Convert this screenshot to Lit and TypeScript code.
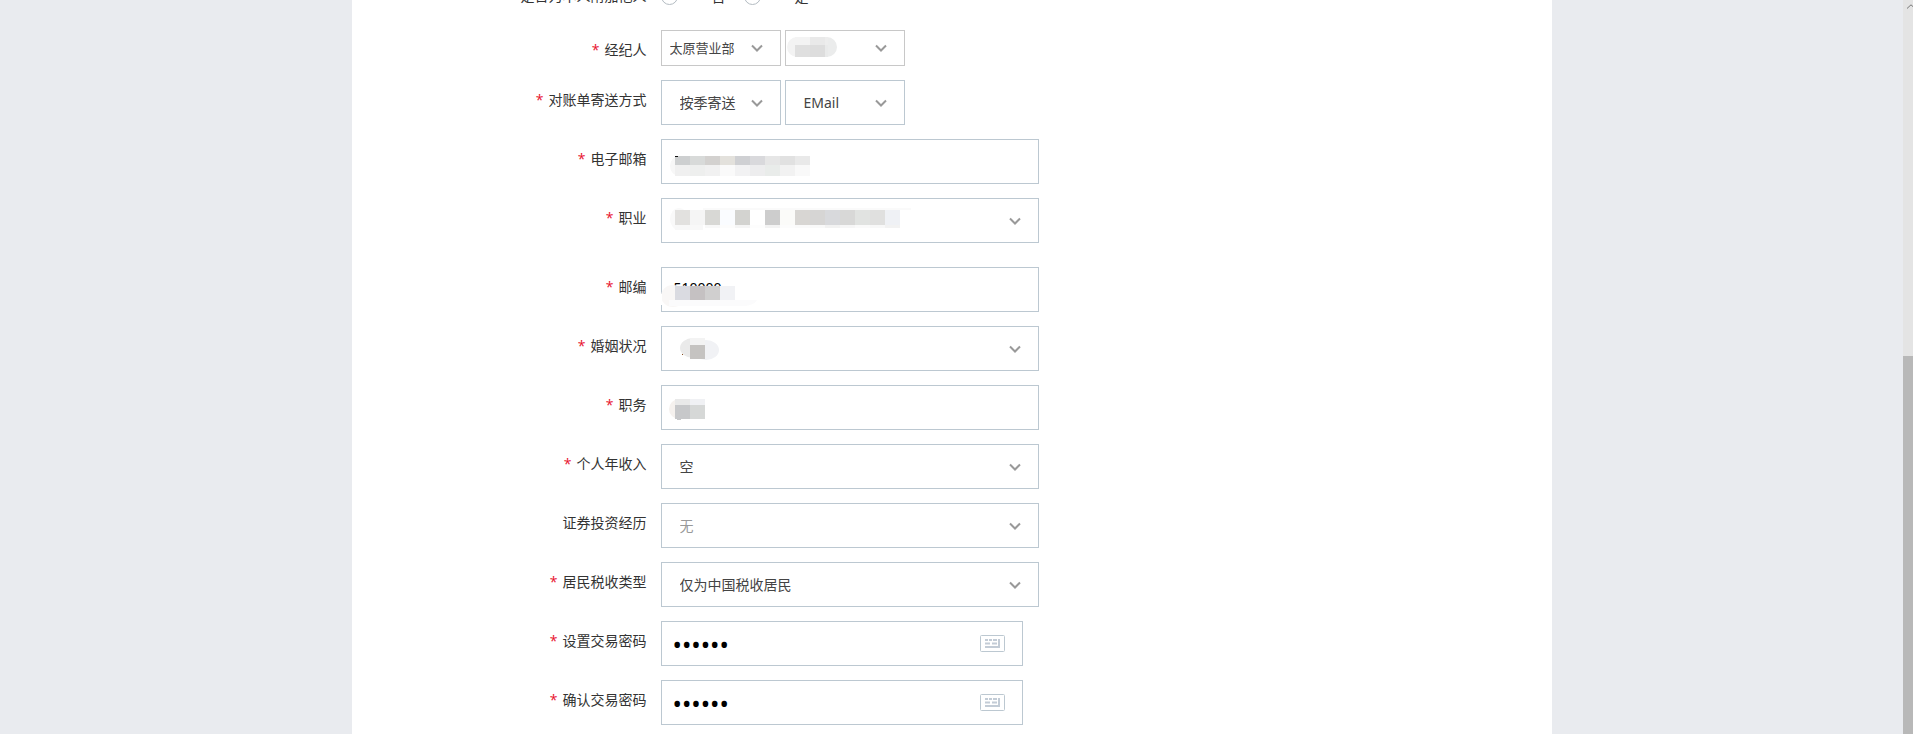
import { LitElement, html, svg, css, nothing } from "lit";
import { customElement, property } from "lit/decorators.js";
import { classMap } from "lit/directives/class-map.js";

type Block = [x: number, y: number, w: number, h: number, fill: string];
type Mask = { blobs: [cx: number, cy: number, rx: number, ry: number, fill: string][]; blocks: Block[] };

const strip = (x: number, y: number, h: number, fills: string[]): Block[] =>
  fills.map((fill, i) => [x + i * 15, y, 15, h, fill] as Block);

const masks: Record<string, Mask> = {
  broker: {
    blobs: [[12, 17, 10, 10, "#f3f3f3"], [42, 17, 10, 10, "#ebecec"]],
    blocks: [
      [10, 7, 15, 8, "#f3f3f3"], [25, 7, 15, 8, "#e9e9e9"], [40, 7, 3, 8, "#ededed"],
      [10, 15, 15, 12, "#dfdfdf"], [25, 15, 15, 12, "#dddddd"], [40, 15, 3, 12, "#e9eaea"],
    ],
  },
  email: {
    blobs: [[18, 27, 9, 10, "#f7f7f7"]],
    blocks: [
      ...strip(14, 17, 9, ["#cdcfd0", "#d8dad9", "#d3d1cf", "#e3e1dc", "#cfd0d3", "#d9d9dc", "#e6e6e6", "#e1e1e1", "#e9e9e9"]),
      ...strip(14, 26, 11, ["#f0f0f0", "#eeefee", "#f1f1f1", "#fafafa", "#f2f2f3", "#ededee", "#e9ecea", "#f2f2f2", "#f9f9f9"]),
      [14, 17, 3, 1, "#111111"],
    ],
  },
  job: {
    blobs: [[18, 21, 9, 11, "#f9f9f9"]],
    blocks: [
      [42, 10, 208, 2, "#fafafa"],
      [14, 27, 28, 5, "#f8f8f8"],
      ...strip(14, 12, 15, ["#e2e1df", "#f5f5f5", "#d8d8d5", "#fafcff", "#d3d3d0", "#ffffff", "#cdcdcd", "#fbfbf9", "#d8d6d3", "#d6d5d4", "#d8d9dc", "#d8d8d7", "#e1e3e1", "#e0e0df", "#eff1f5"]),
      ...strip(44, 27, 3, ["#f8f8f8", "#fcfcfc", "#f5f5f5", "#fdfdfd", "#f3f3f3", "#fcfcfc", "#fafafa", "#f9f9f9", "#f2f2f2", "#f6f6f6", "#fafafa", "#f8f8f8", "#f2f2f2"]),
    ],
  },
  zip: {
    blobs: [[12, 29, 12, 11, "#f9f7f6"], [82, 32, 14, 7, "#fbfbfc"]],
    blocks: [
      [0, 27, 1, 11, "#ffffff"],
      [8, 33, 78, 6, "#fbfbfc"],
      ...strip(14, 19, 14, ["#dadbe1", "#c5c1c2", "#d0cfcf", "#f1f2f5"]),
      [74, 19, 24, 14, "#ffffff"],
    ],
  },
  marriage: {
    blobs: [[32, 22, 13, 10, "#eaeaea"], [45, 24, 13, 10, "#f1f2f5"]],
    blocks: [[29, 12, 15, 7, "#f3f3f3"], [29, 19, 15, 14, "#c5c3c1"], [21, 28, 1, 1, "#8a5020"]],
  },
  post: {
    blobs: [[18, 24, 10, 10, "#f5f1ee"]],
    blocks: [
      [14, 14, 15, 6, "#e9e9e9"], [29, 14, 15, 6, "#f0f1f4"],
      [14, 20, 15, 14, "#c7c8ca"], [29, 20, 15, 14, "#d6d8d7"], [16, 34, 4, 1, "#c7c8ca"],
    ],
  },
};

const drawMask = (name: string) => {
  const mask = masks[name];
  if (!mask) return nothing;
  return html`<svg class="mask" aria-hidden="true">
    ${mask.blobs.map(([cx, cy, rx, ry, f]) => svg`<ellipse cx=${cx} cy=${cy} rx=${rx} ry=${ry} fill=${f}></ellipse>`)}
    ${mask.blocks.map(([x, y, w, h, f]) => svg`<rect x=${x} y=${y} width=${w} height=${h} fill=${f}></rect>`)}
  </svg>`;
};

const fieldStyles = css`
  :host { display: grid; grid-template-columns: minmax(0, 1fr); }
  .box {
    grid-area: 1 / 1;
    box-sizing: border-box;
    width: 100%;
    height: 45px;
    margin: 0;
    border: 1px solid #bcc8d1;
    border-radius: 0;
    background: #fff;
    font: 14px/20px "Noto Sans", "Noto Sans CJK SC", sans-serif;
    outline-offset: -1px;
  }
  .mask { grid-area: 1 / 1; width: 100%; height: 36px; pointer-events: none; z-index: 1; overflow: visible; }
`;

@customElement("select-field")
class SelectField extends LitElement {
  @property() value = "";
  @property() name = "";
  @property() mask = "";
  @property({ type: Boolean }) compact = false;
  @property({ type: Boolean }) muted = false;

  static styles = [fieldStyles, css`
    .box { appearance: none; padding: 0 40px 0 18px; color: #444; }
    .compact { height: 36px; padding: 0 24px 0 8px; border-color: #c8c8c8; font-size: 13px; }
    .muted { color: #999; }
    .arrow { grid-area: 1 / 1; place-self: center end; margin-right: 18px; pointer-events: none; }
  `];

  render() {
    return html`
      <select class=${classMap({ box: true, compact: this.compact, muted: this.muted })} aria-label=${this.name}>
        <option>${this.value}</option>
      </select>
      <svg class="arrow" width="12" height="8" viewBox="0 0 12 8" fill="none" stroke="#999" stroke-width="2" aria-hidden="true">
        <path d="M1 1.5 6 6.5 11 1.5"></path>
      </svg>
      ${drawMask(this.mask)}
    `;
  }
}

@customElement("text-field")
class TextField extends LitElement {
  @property() value = "";
  @property() name = "";
  @property() mask = "";

  static styles = [fieldStyles, css`
    .box { padding: 0 12px 4px; color: #000; }
  `];

  render() {
    return html`<input class="box" type="text" aria-label=${this.name} .value=${this.value}>${drawMask(this.mask)}`;
  }
}

@customElement("password-field")
class PasswordField extends LitElement {
  @property() name = "";

  static styles = [fieldStyles, css`
    .box { padding: 0 60px 0 11px; color: #000; font-size: 25px; }
    .keyboard {
      grid-area: 1 / 1;
      place-self: center end;
      display: flex;
      margin-right: 18px;
      padding: 0;
      border: 0;
      background: none;
      cursor: pointer;
    }
  `];

  render() {
    return html`
      <input class="box" type="password" aria-label=${this.name} .value=${"123456"}>
      <button class="keyboard" type="button" aria-label="软键盘">
        <svg width="25" height="17" viewBox="0 0 25 17" fill="none" aria-hidden="true">
          <rect x=".5" y=".5" width="24" height="16" rx="1" stroke="#bcc8d1"></rect>
          <path d="M5 5h3M9 5h3M13 5h4M5 8.500h5M12 8.500h5" stroke="#c3ccd6" stroke-width="2"></path>
          <path d="M5 12h15M19 4v9" stroke="#c3ccd6" stroke-width="2"></path>
        </svg>
      </button>
    `;
  }
}

@customElement("form-row")
class FormRow extends LitElement {
  @property() label = "";
  @property({ type: Boolean }) required = false;

  static styles = css`
    :host { display: grid; grid-template-columns: 295px minmax(0, 1fr); column-gap: 14px; }
    .label { height: 36px; text-align: right; font-size: 14px; line-height: 40px; color: #333; }
    .star { margin-right: 5px; color: #e8112d; font-family: "Open Sans", sans-serif; }
    .controls { display: flex; gap: 4px; align-items: start; }
  `;

  render() {
    return html`
      <div class="label">${this.required ? html`<span class="star">*</span>` : nothing}${this.label}</div>
      <div class="controls"><slot></slot></div>
    `;
  }
}

@customElement("app-root")
class AppRoot extends LitElement {
  static styles = css`
    :host {
      display: grid;
      grid-template-columns: minmax(0, 1fr) 10px;
      height: 100vh;
      overflow: hidden;
      background: #e9ebef;
      font-family: "Noto Sans", "Noto Sans CJK SC", sans-serif;
    }
    .viewport { overflow: hidden; }
    .panel {
      display: flow-root;
      box-sizing: border-box;
      width: 100%;
      max-width: 1200px;
      min-height: 100vh;
      margin: 0 auto;
      background: #fff;
    }
    .form { display: flex; flex-direction: column; gap: 14px; margin-top: -24px; }
    .short { width: 120px; }
    .wide { width: 378px; }
    .secret { width: 362px; }
    .spaced { margin-top: 10px; }
    .choice { display: flex; align-items: center; gap: 34px; width: 79px; height: 40px; font-size: 14px; color: #333; }
    .radio {
      appearance: none;
      box-sizing: border-box;
      width: 17px;
      height: 17px;
      margin: 0;
      border: 1px solid #b4bcc2;
      border-radius: 50%;
      background: #fff;
    }
    .scrollbar { display: grid; grid-template-rows: 356px 1fr; background: #e4e4e4; }
    .thumb { grid-row: 2; background: #b8b8b8; }
    .up { grid-row: 1; margin: 4px 0 0 4px; }
  `;

  render() {
    return html`
      <main class="viewport">
        <div class="panel">
          <form class="form">
            <form-row label="是否为本人附加他人">
              <label class="choice"><input class="radio" type="radio" name="extra">否</label>
              <label class="choice"><input class="radio" type="radio" name="extra">是</label>
            </form-row>
            <form-row label="经纪人" required>
              <select-field class="short" name="营业部" value="太原营业部" compact></select-field>
              <select-field class="short" name="经纪人" mask="broker" compact></select-field>
            </form-row>
            <form-row label="对账单寄送方式" required>
              <select-field class="short" name="寄送周期" value="按季寄送"></select-field>
              <select-field class="short" name="寄送方式" value="EMail"></select-field>
            </form-row>
            <form-row label="电子邮箱" required><text-field class="wide" name="电子邮箱" mask="email"></text-field></form-row>
            <form-row label="职业" required><select-field class="wide" name="职业" mask="job"></select-field></form-row>
            <form-row class="spaced" label="邮编" required><text-field class="wide" name="邮编" value="510000" mask="zip"></text-field></form-row>
            <form-row label="婚姻状况" required><select-field class="wide" name="婚姻状况" mask="marriage"></select-field></form-row>
            <form-row label="职务" required><text-field class="wide" name="职务" mask="post"></text-field></form-row>
            <form-row label="个人年收入" required><select-field class="wide" name="个人年收入" value="空"></select-field></form-row>
            <form-row label="证券投资经历"><select-field class="wide" name="证券投资经历" value="无" muted></select-field></form-row>
            <form-row label="居民税收类型" required><select-field class="wide" name="居民税收类型" value="仅为中国税收居民"></select-field></form-row>
            <form-row label="设置交易密码" required><password-field class="secret" name="设置交易密码"></password-field></form-row>
            <form-row label="确认交易密码" required><password-field class="secret" name="确认交易密码"></password-field></form-row>
          </form>
        </div>
      </main>
      <div class="scrollbar" aria-hidden="true">
        <svg class="up" width="6" height="6" viewBox="0 0 6 6" fill="none" stroke="#777"><path d="M0 4.500 4 .8 8 4.500"></path></svg>
        <div class="thumb"></div>
      </div>
    `;
  }
}
